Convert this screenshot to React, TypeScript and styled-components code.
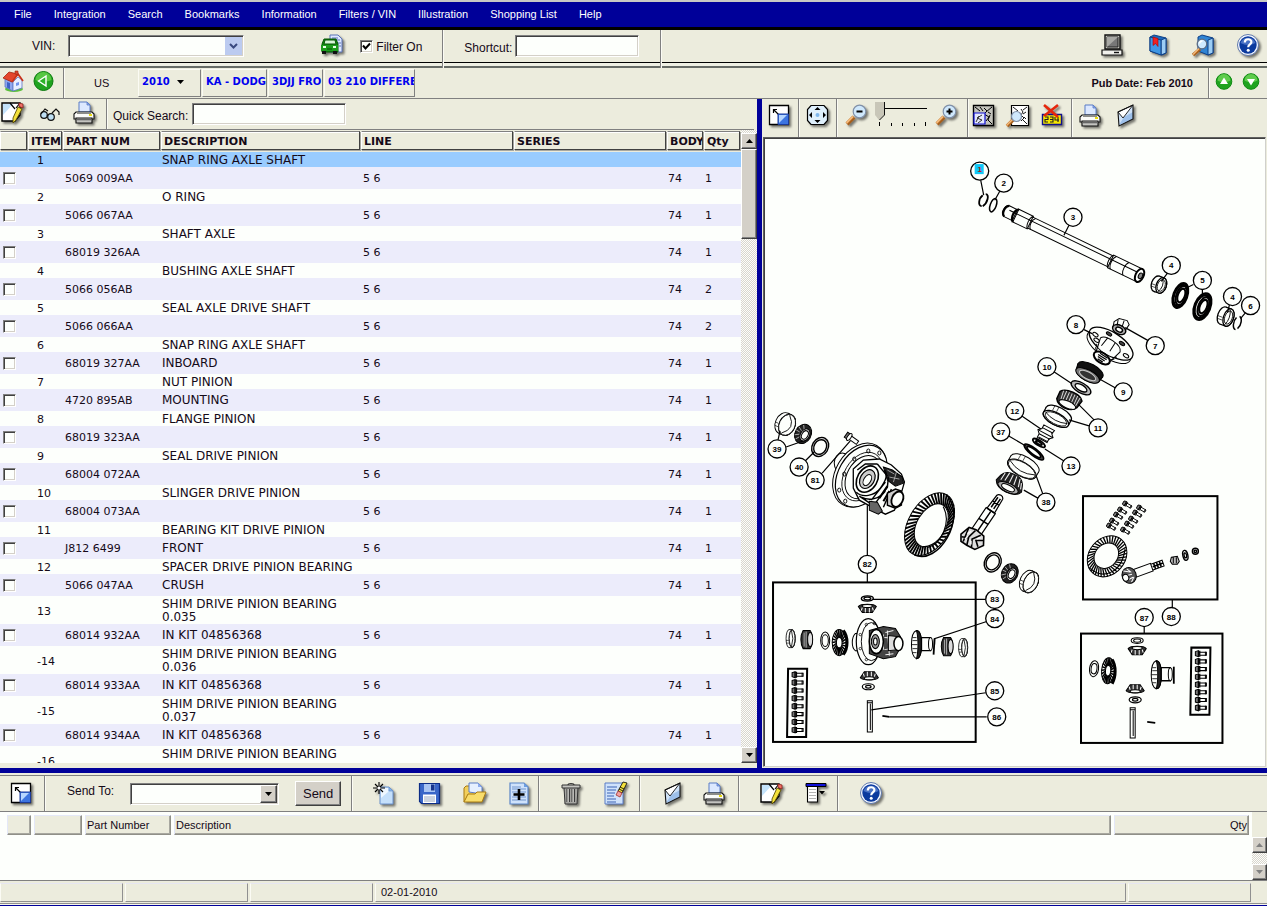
import React from 'react';
import styled, { createGlobalStyle, css } from 'styled-components';

const beige = '#ececdd';
const paper = '#fdfffc';
const navy = '#000099';
const sans = '"Liberation Sans", Arial, sans-serif';
const wide = '"DejaVu Sans", Verdana, sans-serif';

const GlobalStyle = createGlobalStyle`
  *, *::before, *::after { box-sizing: border-box; }
  html, body { margin: 0; height: 100%; background: ${beige}; }
  body { font-family: ${sans}; font-size: 12px; color: #150a18; }
  #root { height: 100%; }
  button, input, select { font-family: inherit; font-size: 12px; color: inherit; margin: 0; }
`;

const Page = styled.div`
  display: flex;
  flex-direction: column;
  height: 100vh;
  min-height: 600px;
  overflow: hidden;
  background: ${beige};
`;

const MenuBar = styled.nav`
  display: flex;
  flex: none;
  align-items: center;
  gap: 22px;
  height: 30px;
  padding: 0 0 2px 14px;
  background: ${navy};
  border-top: 2px solid #c8c8c4;
  border-bottom: 3px solid #000;
`;

const MenuLink = styled.a`
  color: #fff;
  font-size: 11px;
  line-height: 14px;
  text-decoration: none;
  white-space: nowrap;
`;

const Bar = styled.div<{ $h: number }>`
  display: flex;
  flex: none;
  align-items: stretch;
  height: ${(p) => p.$h}px;
`;

const VinBar = styled(Bar)`
  box-shadow: inset 0 -2px #666b66, inset 0 -5px #eff0e4, inset 0 -6px #000;
`;

const NavBar = styled(Bar)`
  border-bottom: 1px solid #808080;
`;

const Group = styled.div<{ $pl?: number; $pr?: number; $pb?: number; $gap?: number; $line?: boolean; $grow?: boolean }>`
  display: flex;
  align-items: center;
  gap: ${(p) => p.$gap ?? 0}px;
  padding: 0 ${(p) => p.$pr ?? 0}px ${(p) => p.$pb ?? 0}px ${(p) => p.$pl ?? 0}px;
  ${(p) => p.$grow && 'flex: 1; justify-content: flex-end;'}
  ${(p) => p.$line && `border-right: 1px solid #808080; box-shadow: 1px 0 #fbfbf4;`}
`;

const IconButton = styled.button`
  display: block;
  flex: none;
  width: 24px;
  height: 24px;
  padding: 0;
  border: 0;
  background: none;
  line-height: 0;
`;

const IconSvg = styled.svg<{ $flat?: boolean }>`
  display: block;
  overflow: visible;
  ${(p) => !p.$flat && 'filter: drop-shadow(2px 2px 1px rgba(0, 0, 0, 0.5));'}
`;

const Label = styled.label`
  line-height: 16px;
  white-space: nowrap;
`;

const LowLabel = styled(Label)`
  padding-top: 4px;
`;

const HighLabel = styled(Label)`
  padding-bottom: 6px;
`;

const sunken = css`
  border: 1px solid;
  border-color: #808080 #fff #fff #808080;
  box-shadow: inset 1px 1px #404040, inset -1px -1px #d4d0c8;
  background: ${paper};
  border-radius: 0;
  outline: 0;
`;

const TextBox = styled.input<{ $w: number }>`
  ${sunken}
  width: ${(p) => p.$w}px;
  height: 22px;
  padding: 0 3px;
`;

const SelectWrap = styled.div<{ $w: number }>`
  position: relative;
  width: ${(p) => p.$w}px;
  height: 22px;
`;

const SelectBox = styled.select`
  ${sunken}
  appearance: none;
  width: 100%;
  height: 22px;
  padding: 0 20px 0 4px;
`;

const SelectArrow = styled.span<{ $blue?: boolean }>`
  position: absolute;
  top: 2px;
  right: 2px;
  display: grid;
  place-items: center;
  width: 17px;
  height: 18px;
  pointer-events: none;
  background: ${(p) => (p.$blue ? '#bccbf0' : '#d4d0c8')};
  ${(p) => !p.$blue && 'border: 1px solid; border-color: #fff #404040 #404040 #fff; box-shadow: inset -1px -1px #808080;'}
`;

const Tick = styled.input`
  appearance: none;
  display: block;
  flex: none;
  width: 13px;
  height: 13px;
  background: ${paper};
  border: 1px solid;
  border-color: #808080 #fff #fff #808080;
  box-shadow: inset 1px 1px #404040, inset -1px -1px #d4d0c8;
`;

const TickBox = styled.span`
  position: relative;
  display: block;
  width: 13px;
  height: 13px;
  svg { position: absolute; left: 2px; top: 2px; pointer-events: none; }
`;

const Crumb = styled.button<{ $w: number }>`
  flex: none;
  width: ${(p) => p.$w}px;
  margin: 1px 1px 1px 0;
  padding: 0 0 4px 3px;
  overflow: hidden;
  text-align: left;
  white-space: nowrap;
  font-family: ${wide};
  font-size: 10px;
  font-weight: bold;
  color: #0000ee;
  background: ${beige};
  border: 1px solid;
  border-color: #fbfbf4 #808080 #808080 #fbfbf4;
  svg { margin-left: 7px; vertical-align: 1px; }
`;

const PubDate = styled.span`
  font-size: 11px;
  font-weight: bold;
  line-height: 14px;
  white-space: nowrap;
`;

const Country = styled.span`
  font-size: 11px;
  width: 44px;
`;

const Main = styled.main`
  display: grid;
  flex: 1;
  min-height: 0;
  grid-template-columns: minmax(0, 757fr) 5px minmax(0, 505fr);
  border-bottom: 5px solid ${navy};
`;

const Splitter = styled.div`
  background: ${navy};
`;

const Pane = styled.section`
  display: flex;
  flex-direction: column;
  min-height: 0;
  min-width: 0;
`;

const SearchBar = styled(Bar)`
  margin-right: 3px;
  border-bottom: 1px solid #808080;
`;

const PartsArea = styled.div`
  display: flex;
  flex: 1;
  min-height: 0;
  padding-bottom: 5px;
`;

const PartsScroll = styled.div`
  flex: 1;
  min-width: 0;
  overflow: hidden;
  background: ${paper};
`;

const PartsTable = styled.table`
  width: 100%;
  table-layout: fixed;
  border-collapse: collapse;
  font-family: ${wide};
  font-size: 11px;
  line-height: 13px;
`;

const HeadCell = styled.th`
  height: 22px;
  padding: 1px 1px 2px 0;
  text-align: left;
  background: ${beige};
`;

const HeadFace = styled.div`
  height: 19px;
  padding: 3px 0 0 2px;
  overflow: hidden;
  white-space: nowrap;
  border: 1px solid;
  border-color: #808080 #404040 #404040 #fff;
  box-shadow: inset 0 1px #fff, 1px 1px #a8a8a0;
  line-height: 14px;
`;

const Row = styled.tr<{ $tone: string }>`
  background: ${(p) => p.$tone};
`;

const Cell = styled.td<{ $pl?: number; $part?: boolean }>`
  height: ${(p) => (p.$part ? 22 : 15)}px;
  padding: ${(p) => (p.$part ? 0 : 2)}px 0 0 ${(p) => p.$pl ?? 2}px;
  vertical-align: middle;
`;

const NameCell = styled(Cell)`
  font-size: 12px;
`;

const Scrollbar = styled.div<{ $w: number; $pt?: number }>`
  display: flex;
  flex: none;
  flex-direction: column;
  width: ${(p) => p.$w}px;
  padding-top: ${(p) => p.$pt ?? 0}px;
  background: repeating-conic-gradient(#fdfdfa 0 25%, #d8d6ce 0 50%) 0 0 / 2px 2px;
`;

const ScrollButton = styled.button`
  display: grid;
  flex: none;
  place-items: center;
  width: 100%;
  height: 16px;
  padding: 0;
  background: #d4d0c8;
  border: 1px solid;
  border-color: #fff #404040 #404040 #fff;
  box-shadow: inset -1px -1px #808080;
`;

const Thumb = styled.div`
  height: 90px;
  background: #d4d0c8;
  border: 1px solid;
  border-color: #fff #404040 #404040 #fff;
  box-shadow: inset -1px -1px #808080;
`;

const Spacer = styled.div`
  flex: 1;
`;

const Viewer = styled.div`
  flex: 1;
  min-height: 0;
  margin: 0 1px 1px 1px;
  overflow: hidden;
  background: ${paper};
  border: 1px solid;
  border-color: #606060 #d0d0cc #d0d0cc #606060;
  box-shadow: inset 1px 1px #404040;
  svg { display: block; width: 100%; height: 100%; }
`;

const Slider = styled.div`
  position: relative;
  width: 56px;
  height: 28px;
  input { position: absolute; inset: 0; width: 56px; height: 28px; margin: 0; opacity: 0; }
`;

const SendBar = styled(Bar)`
  margin-top: 2px;
  border-top: 1px solid #808080;
  border-bottom: 1px solid #808080;
`;

const SendButton = styled.button`
  width: 46px;
  height: 25px;
  padding: 0;
  font-size: 13px;
  background: #d4d0c8;
  border: 1px solid;
  border-color: #fff #404040 #404040 #fff;
  box-shadow: inset -1px -1px #808080;
`;

const ListArea = styled.section`
  display: flex;
  flex: none;
  height: 69px;
  border-bottom: 1px solid #808080;
`;

const ListBody = styled.div`
  flex: 1;
  padding-left: 4px;
  background: ${paper};
`;

const ListTable = styled.table`
  width: 100%;
  table-layout: fixed;
  border-collapse: separate;
  border-spacing: 3px;
  font-size: 11px;
`;

const ListHead = styled.th<{ $right?: boolean }>`
  height: 20px;
  padding: 0 1px;
  text-align: ${(p) => (p.$right ? 'right' : 'left')};
  font-weight: normal;
  background: ${beige};
  border: 1px solid;
  border-color: #e4e8f8 #909088 #909088 #e4e8f8;
  box-shadow: inset -1px -1px #a8a8a0;
`;

const ListScroll = styled.div`
  display: flex;
  padding-top: 25px;
`;

const StatusBar = styled.footer`
  display: flex;
  flex: none;
  gap: 2px;
  height: 25px;
  padding: 2px 16px 2px 0;
  border-bottom: 1px solid ${navy};
  box-shadow: inset 0 -1px #f6f6ee, inset 0 -2px #909090;
`;

const StatusCell = styled.div<{ $grow?: boolean }>`
  flex: ${(p) => (p.$grow ? '1' : '0 0 123px')};
  height: 19px;
  padding-left: 5px;
  font-size: 11px;
  line-height: 17px;
  border: 1px solid;
  border-color: #e6e6f2 #909090 #909090 #fbfbf4;
`;

/* ---------- toolbar icons ---------- */

const art: Record<string, React.ReactNode> = {
  car: (
    <>
      <path d="M10 1h8l4 4v13H10z" fill="#dfe8ff" stroke="#5a74b8" />
      <path d="M12 4h6M12 6h8M18 9h3M19 12h2" stroke="#5a74b8" />
      <path d="M4 5h12l2 5v8H2v-8z" fill="#128a12" stroke="#055505" />
      <path d="M5 6h10l1 4H4z" fill="#d8f4d8" stroke="#055505" />
      <path d="M1 11h17v6H1z" fill="#1d9c1d" />
      <path d="M3 13h3M13 13h3" stroke="#e8ffe8" strokeWidth="2" />
      <path d="M7 15h5" stroke="#055505" />
      <path d="M2 17h4v3H2zM13 17h4v3h-4z" fill="#111" />
    </>
  ),
  monitor: (
    <>
      <path d="M4 1h15v14H4z" fill="#c4c4bc" stroke="#111" strokeWidth="1.4" />
      <path d="M6 3h11v10H6z" fill="#777" stroke="#222" />
      <path d="M6 13V3h11z" fill="#a8a8a4" />
      <path d="M1 16h20v5H1z" fill="#f0f0ec" stroke="#111" strokeWidth="1.2" />
      <path d="M13 18.500h5" stroke="#111" strokeWidth="1.4" />
    </>
  ),
  book: (
    <>
      <path d="M4 3l4-2 12 3v15l-4 2L4 17z" fill="#1d6cc0" stroke="#0d3f86" />
      <path d="M15 6l5-2v15l-5 2z" fill="#9ccdf4" stroke="#0d3f86" />
      <path d="M4 3l11 3v15L4 17z" fill="#3f97e4" stroke="#0d3f86" />
      <path d="M7 3l5 1.500v8L9.500 9.500 7 11.500z" fill="#e22" stroke="#a00" strokeWidth=".6" />
    </>
  ),
  bookSearch: (
    <>
      <path d="M7 3l4-2 11 3v15l-5 2-10-4z" fill="#2f84d4" stroke="#0d3f86" />
      <path d="M17 6l5-2v15l-5 2z" fill="#9ccdf4" stroke="#0d3f86" />
      <path d="M2 21l7-6" stroke="#a8601c" strokeWidth="3.500" />
      <path d="M2 20.500l6-6" stroke="#f5b878" strokeWidth="1.600" />
      <circle cx="11" cy="10" r="4.800" fill="#cfeaff" stroke="#5c6c84" strokeWidth="1.300" />
      <path d="M8.500 9.500a3 3 0 0 1 3-2.500" stroke="#fff" strokeWidth="1.500" fill="none" />
    </>
  ),
  help: (
    <>
      <circle cx="12" cy="11" r="10.500" fill="#f6f9ff" stroke="#6079ac" />
      <circle cx="12" cy="11" r="8.700" fill="#0b3a9e" />
      <path d="M4.500 9a8 8 0 0 1 15 0c-5 2.500-10 2.500-15 0z" fill="#6a8fd8" opacity=".65" />
      <path d="M8.800 8.600c0-4.600 6.800-4.200 6.600-.4-.2 2.200-3.200 2.200-3.200 5" fill="none" stroke="#fff" strokeWidth="2.200" />
      <circle cx="12.200" cy="16.200" r="1.500" fill="#fff" />
    </>
  ),
  home: (
    <>
      <ellipse cx="12" cy="19" rx="9" ry="3" fill="#5cbf3c" />
      <path d="M3 8l8 4v9l-8-4z" fill="#8fa6ee" stroke="#5d76c4" strokeWidth=".8" />
      <path d="M11 12l5-5 4 3v8l-9 3z" fill="#e8efff" stroke="#5d76c4" strokeWidth=".8" />
      <path d="M5 12l3 1v6l-3-1.500z" fill="#3f62c8" />
      <path d="M14 13l3-1v3l-3 1z" fill="#6f93ec" />
      <path d="M1 8l6-6 9 2-6 8z" fill="#e4452c" stroke="#a3240f" strokeWidth=".8" />
      <path d="M10 12l6-8 5 7" fill="none" stroke="#c8321a" strokeWidth="1.800" />
      <path d="M13 1h3v4l-3-1z" fill="#d8432c" stroke="#a3240f" strokeWidth=".6" />
    </>
  ),
  back: (
    <>
      <circle cx="10.500" cy="11" r="9.500" fill="#1fa31f" stroke="#0d7a10" />
      <path d="M2.500 10a8 8 0 0 1 16 0c-5 2-11 2-16 0z" fill="#7be05a" opacity=".6" />
      <path d="M5.500 11l7.500-5v10z" fill="#2bb428" stroke="#fff" strokeWidth="1.400" />
    </>
  ),
  up: (
    <>
      <circle cx="12" cy="10.500" r="7.800" fill="#1fa31f" stroke="#0d8a10" />
      <path d="M5.500 9.500a6.500 6.500 0 0 1 13 0c-4 2-9 2-13 0z" fill="#8be86a" opacity=".6" />
      <path d="M12 6.500l4 6.500H8z" fill="#fff" />
    </>
  ),
  down: (
    <>
      <circle cx="12" cy="10.500" r="7.800" fill="#1fa31f" stroke="#0d8a10" />
      <path d="M5.500 9.500a6.500 6.500 0 0 1 13 0c-4 2-9 2-13 0z" fill="#8be86a" opacity=".6" />
      <path d="M12 14.500L16 8H8z" fill="#fff" />
    </>
  ),
  edit: (
    <>
      <path d="M1 2h18v12l-5 6H1z" fill="#fff" stroke="#000" strokeWidth="1.400" />
      <path d="M2 3h10L2 14z" fill="#c3e2fa" />
      <path d="M9 2l5 6M15 7l4-5" stroke="#000" strokeWidth="1.200" />
      <path d="M17 6l4 2-6 11-3 3v-5z" fill="#f4e13c" stroke="#5b4e00" strokeWidth=".9" />
      <path d="M18 2l4 1v4l-4-1.500z" fill="#f07068" stroke="#8c2018" strokeWidth=".8" />
    </>
  ),
  glasses: (
    <>
      <circle cx="7" cy="14" r="3.300" fill="#bfe0f4" stroke="#111" strokeWidth="1.200" />
      <circle cx="14" cy="16" r="3.300" fill="#bfe0f4" stroke="#111" strokeWidth="1.200" />
      <path d="M4 13l4-5 3 2M15 12l4-4 3 3v3M10 14l1 1" fill="none" stroke="#111" strokeWidth="1.200" />
    </>
  ),
  printer: (
    <>
      <path d="M6 11V1h8l3 3v7z" fill="#dce8ff" stroke="#5b7cc6" />
      <path d="M14 1v3h3z" fill="#8eacee" stroke="#5b7cc6" strokeWidth=".8" />
      <path d="M3 11h16l2 2v5H1v-5z" fill="#fbfbf8" stroke="#111" strokeWidth="1.100" />
      <path d="M4 11h14v2H4z" fill="#8c8c88" />
      <path d="M16 13h3v2h-3z" fill="#e8dc10" />
      <path d="M3 17h16v5H3z" fill="#c4c4c0" stroke="#111" strokeWidth="1.100" />
      <path d="M4 18.500h14" stroke="#666" strokeWidth="1.600" />
    </>
  ),
  resize: (
    <>
      <path d="M1.500 1.500h19v19h-19z" fill="#fff" stroke="#000" strokeWidth="1.300" />
      <path d="M5.500 9V5.500H9M6 6l5 5" fill="none" stroke="#000" strokeWidth="1.200" />
      <path d="M10 10h10.500v10.500H10z" fill="#3c74e0" stroke="#1b3a9a" />
      <path d="M11 19v-8h8z" fill="#b6d6ff" />
    </>
  ),
  pan: (
    <>
      <path d="M5 1.500h13l3.500 4v11l-3.500 4H5l-3.500-4v-11z" fill="#dff0fc" stroke="#000" strokeWidth="1.200" />
      <path d="M11.500 3l3 3h-6zM11.500 19l3-3h-6zM3 11l3-3v6zM20 11l-3-3v6z" fill="#000" />
      <circle cx="11.500" cy="11" r="2" fill="#7fb7ec" />
    </>
  ),
  zoomOut: (
    <>
      <path d="M2 20l7-7" stroke="#a8601c" strokeWidth="4" />
      <path d="M1.500 19l6.500-6.500" stroke="#f5b878" strokeWidth="1.800" />
      <circle cx="14.500" cy="7.500" r="6.300" fill="#cfe8fc" stroke="#8090a8" strokeWidth="1.200" />
      <path d="M11.500 7.500h6" stroke="#000" strokeWidth="2" />
    </>
  ),
  zoomIn: (
    <>
      <path d="M2 20l7-7" stroke="#a8601c" strokeWidth="4" />
      <path d="M1.500 19l6.500-6.500" stroke="#f5b878" strokeWidth="1.800" />
      <circle cx="14.500" cy="7.500" r="6.300" fill="#cfe8fc" stroke="#8090a8" strokeWidth="1.200" />
      <path d="M11.500 7.500h6M14.500 4.500v6" stroke="#000" strokeWidth="2" />
    </>
  ),
  zone: (
    <>
      <path d="M1.500 1.500h20v20h-20z" fill="#c4c4bc" stroke="#000" strokeWidth="1.400" />
      <path d="M3 3l5 4M20 3l-6 5M20 20l-4-4M12 4l3 3-3 3 5 3-3 4M16 8l3 2M8 3l3 4M18 11l-2 5" fill="none" stroke="#000" />
      <path d="M2 9h11v11H2z" fill="#e4e8fc" stroke="#1010d0" strokeWidth="1.200" />
      <path d="M10 11l-5 3 5 2-4 3M4 18l3-6" fill="none" stroke="#333" />
    </>
  ),
  zoneSearch: (
    <>
      <path d="M5.500 1.500h17v20h-17z" fill="#fff" stroke="#000" strokeWidth="1.200" />
      <path d="M7 3l5 4M21 3l-4 3M21 20l-4-4M15 5l2 3-2 3 3 3-3 3M20 8l-3 2M18 13l2 2" fill="none" stroke="#000" strokeWidth=".9" />
      <path d="M1 22l7-7" stroke="#a8601c" strokeWidth="3.500" />
      <path d="M.5 21.500l6-6" stroke="#f5b878" strokeWidth="1.600" />
      <circle cx="10.500" cy="12.500" r="5" fill="#cfe8fc" stroke="#8090a8" strokeWidth="1.200" />
    </>
  ),
  clear: (
    <>
      <path d="M2.500 10.500h19v10h-19z" fill="#f6e800" stroke="#10108c" strokeWidth="1.400" />
      <path d="M5 13h3v2.500H5V18h3M10 13h3v5h-3M10 15.500h3M15 13v3h4M18 13v5" fill="none" stroke="#222" strokeWidth="1.100" />
      <path d="M4 1l14 12M18 1L4 12" stroke="#e6260c" strokeWidth="2.600" />
    </>
  ),
  envelope: (
    <>
      <path d="M3 8L18 1v14L4 22z" fill="#cfe2f8" />
      <path d="M4 21l5-8 9-5v7z" fill="#9dc0ea" />
      <path d="M3 8l5 6L18 1z" fill="#fff" stroke="#111" strokeWidth=".9" />
      <path d="M3 8L18 1v14L4 22z" stroke="#111" strokeWidth="1.100" />
    </>
  ),
  fresh: (
    <>
      <path d="M7 22V5h9l4 4v13z" fill="#c5e0fb" stroke="#6a92cc" />
      <path d="M8 6h7v4L8 16z" fill="#eef7ff" />
      <path d="M16 5v4h4z" fill="#84b4ea" stroke="#6a92cc" strokeWidth=".7" />
      <path d="M6 0v12M0 6h12M2 2l8 8M10 2l-8 8" stroke="#000" strokeWidth="1.100" />
      <circle cx="6" cy="6" r="1.600" fill="#fff" />
    </>
  ),
  save: (
    <>
      <path d="M1.500 1.500h20v20h-18l-2-2z" fill="#3a66c8" stroke="#0c2c86" strokeWidth="1.200" />
      <path d="M6 2h11v8H6z" fill="#a9c4f2" />
      <path d="M13 2.500h3.500v6H13z" fill="#16348c" />
      <path d="M5 12.500h13V21H5z" fill="#fff" />
      <path d="M6 15h11M6 17h11M6 19h11" stroke="#9aa8c0" />
    </>
  ),
  folder: (
    <>
      <path d="M1 20V6l2-2h5l2 2h8v3" fill="#f2cf5c" stroke="#a87a10" />
      <path d="M6 10V1h9l4 4v7z" fill="#e6f0ff" stroke="#5b7cc6" />
      <path d="M15 1v4h4z" fill="#8eacee" />
      <path d="M1 20l4-8h7l2-2h9l-4 10z" fill="#f8dd6c" stroke="#a87a10" />
    </>
  ),
  add: (
    <>
      <path d="M2 1h14l4 4v17H2z" fill="#cfe2fb" stroke="#5b86c8" strokeWidth="1.200" />
      <path d="M16 1v4h4z" fill="#6d9ee0" />
      <path d="M4 5h9M4 7h14M4 10h14M4 15h14M4 18h14" stroke="#7295cc" />
      <path d="M11 7v11M5.500 12.500h11" stroke="#000" strokeWidth="2.600" />
    </>
  ),
  trash: (
    <>
      <path d="M4 5h14l-1 17H5z" fill="#a6a6a2" stroke="#333" />
      <path d="M7 7v13M9.500 7v13M12 7v13M14.500 7v13" stroke="#3c3c3c" strokeWidth="1.100" />
      <path d="M8 7v13M13 7v13" stroke="#e8e8e4" strokeWidth=".7" />
      <path d="M2 3h18v3H2z" fill="#c6c6c2" stroke="#333" />
      <path d="M8 3c0-2 6-2 6 0" fill="none" stroke="#333" strokeWidth="1.200" />
    </>
  ),
  listEdit: (
    <>
      <path d="M1 1h18v21H1z" fill="#cfe2fb" stroke="#5b7cc6" />
      <path d="M3 5h10M3 8h9M3 11h8M3 14h7M3 17h9M3 20h9" stroke="#3c62b4" strokeWidth="1.100" />
      <path d="M19 0l4 1-5 10-4-2z" fill="#f4e13c" stroke="#000" strokeWidth=".8" />
      <path d="M16 5l4 2M15 7l4 2" stroke="#000" strokeWidth=".8" />
      <path d="M14 9l4 2-2 4-4-2z" fill="#f0a0a0" stroke="#a03028" strokeWidth=".8" />
    </>
  ),
  columns: (
    <>
      <path d="M2.500 4h10v16h-10z" fill="#fff" stroke="#000" strokeWidth="1.100" />
      <path d="M4 7.500h7M4 10.500h7M4 13.500h7M4 16.500h7" stroke="#aaa" strokeWidth=".9" />
      <path d="M1 1.500h20v3H1z" fill="#1010d8" stroke="#000" />
      <path d="M14 9h6l-3 3.500z" fill="#000" />
    </>
  ),
};

const flatIcons = ['up', 'down', 'back', 'glasses', 'home'];

const Icon = ({ name, title }: { name: string; title: string }) => (
  <IconButton type="button" aria-label={title} title={title}>
    <IconSvg $flat={flatIcons.includes(name)} width="24" height="24" viewBox="0 0 24 24" fill="none">
      {art[name]}
    </IconSvg>
  </IconButton>
);

const Triangle = ({ up, dim }: { up?: boolean; dim?: boolean }) => (
  <svg width="7" height="4" viewBox="0 0 7 4">
    <path d={up ? 'M0 4h7L3.500 0z' : 'M0 0h7L3.500 4z'} fill={dim ? '#808080' : '#000'} />
  </svg>
);

/* ---------- parts illustration ---------- */

type Oval = { x: number; y: number; a: number; b: number; r?: number };

const Ring = ({ x, y, a, b, r = 0, k = 0.75, w = 1, fill = paper }: Oval & { k?: number; w?: number; fill?: string }) => (
  <g transform={`translate(${x} ${y}) rotate(${r})`} strokeWidth={w}>
    <ellipse rx={a} ry={b} fill={fill} />
    <ellipse rx={a * k} ry={b * k} fill={paper} />
  </g>
);

/* open band seen from one side: two ovals joined by straight edges, far rim showing inside */
const Sleeve = ({ x, y, a, b, r = 0, d, w = 1, k = 0.94 }: Oval & { d: number; w?: number; k?: number }) => (
  <g transform={`translate(${x} ${y}) rotate(${r})`} strokeWidth={w}>
    <ellipse rx={a} ry={b} cy={-d} fill={paper} />
    <path d={`M${-a} ${-d}V0A${a} ${b} 0 0 0 ${a} 0V${-d}`} fill={paper} />
    <ellipse rx={a} ry={b} fill={paper} />
    <ellipse rx={a * k} ry={b * k} fill={paper} strokeWidth=".8" />
    <path d={`M${-a * 0.88} ${-b * 0.2}Q0 ${b * 1.7 - d} ${a * 0.88} ${-b * 0.2}`} strokeWidth=".8" />
    <path d={`M${-a * 0.5} ${-d - b * 0.86}v${d * 0.9}M${-a * 0.2} ${-d - b}v${d * 0.9}`} strokeWidth=".6" />
  </g>
);

const Teeth = ({ x, y, a, b, r = 0, k = 0.6, n = 24, w = 1.4, off = 0 }: Oval & { k?: number; n?: number; w?: number; off?: number }) => (
  <g transform={`translate(${x} ${y}) rotate(${r})`}>
    <ellipse rx={a} ry={b} fill={paper} />
    {Array.from({ length: n }, (_, i) => {
      const t = (i / n) * Math.PI * 2;
      const u = t + 0.16;
      return (
        <line
          key={i}
          x1={a * Math.cos(t)}
          y1={b * Math.sin(t)}
          x2={a * k * Math.cos(u)}
          y2={off + b * k * Math.sin(u)}
          strokeWidth={w}
        />
      );
    })}
    <ellipse rx={a * k} ry={b * k} cy={off} fill={paper} />
  </g>
);

const Bolt = ({ x, y, r = 0, s = 1 }: { x: number; y: number; r?: number; s?: number }) => (
  <g transform={`translate(${x} ${y}) rotate(${r}) scale(${s})`}>
    <path d="M0-1.500h7v3H0z" fill={paper} />
    <path d="M-4-2l3-1v6l-3-1z" fill="#777" />
    <path d="M-1-2.500h1.500v5H-1zM6-2v4" />
  </g>
);

const BoltBox = ({ x, y, w, h, n }: { x: number; y: number; w: number; h: number; n: number }) => (
  <g>
    <path d={`M${x + 1} ${y}h${w - 1}l-1 ${h}h-${w - 1}z`} strokeWidth="2" fill={paper} />
    {Array.from({ length: n }, (_, i) => (
      <Bolt key={i} x={x + 9} y={y + 6 + (i * (h - 13)) / (n - 1)} />
    ))}
  </g>
);

const Callout = ({ x, y, n, lit }: { x: number; y: number; n: number; lit?: boolean }) => (
  <g>
    <circle cx={x} cy={y} r="9" fill={paper} strokeWidth="1.300" />
    {lit && <rect x={x - 5} y={y - 7} width="9" height="10" fill="#10c8f8" stroke="none" />}
    <text x={x} y={lit ? y + 1 : y + 3} textAnchor="middle" fontFamily={sans} fontSize="8" fontWeight="bold" fill={lit ? '#b02020' : '#000'} stroke="none">
      {n}
    </text>
  </g>
);

/* mating bevel gear, drawn end up */
const SpiderGear = ({ x, y, flip }: { x: number; y: number; flip?: boolean }) => (
  <g transform={`translate(${x} ${y}) scale(1 ${flip ? -1 : 1})`}>
    <path d="M-9-2c2-3 16-3 18 0l-4 6h-10z" fill="#333" />
    <path d="M-6 2l1-3M-2 4v-5M2 4v-5M6 2L5-1" stroke="#fff" />
    <ellipse cy="-2.500" rx="5" ry="1.500" fill={paper} />
  </g>
);

const SideGear = ({ x, y }: { x: number; y: number }) => (
  <g transform={`translate(${x} ${y})`}>
    <path d="M0-14c4 0 5 6 5 14s-1 14-5 14c-3-1-5-6-5-14s2-13 5-14z" fill={paper} />
    <path d="M0-14c4 0 5 6 5 14s-1 14-5 14c2-7 2-21 0-28z" fill="#222" />
    <path d="M-4-7h4M-4-4h5M-5 0h6M-4 4h5M-4 8h4" strokeWidth=".8" />
    <path d="M5-7h9v13H5z" fill={paper} strokeWidth="1.300" />
    <ellipse cx="14" cy="-.5" rx="2" ry="6.500" fill={paper} />
  </g>
);

const BearingCone = ({ x, y, r }: { x: number; y: number; r: number }) => (
  <g transform={`translate(${x} ${y}) rotate(${r})`}>
    <ellipse rx="10" ry="8" fill="#222" />
    <path d="M-8-4l5 3M-5-7l3 4M0-8v4M4-7L2-3M8-4L4-1" stroke="#ccc" strokeWidth=".7" />
    <ellipse cy="2" rx="6.500" ry="4.500" fill="#ddd" />
    <ellipse cy="2" rx="4.500" ry="3" fill={paper} />
  </g>
);

const SideBearing = ({ x, y }: { x: number; y: number }) => (
  <g transform={`translate(${x} ${y})`}>
    <path d="M-4-9h7c3 4 3 14 0 18h-7c-3-5-3-13 0-18z" fill="#333" />
    <path d="M-3-7v14M-1-8v16" stroke="#ccc" strokeWidth=".8" />
    <ellipse cx="3" rx="2.500" ry="7" fill="#ddd" />
  </g>
);

const callouts: [number, number, number][] = [
  [1004, 184, 2], [1073, 218, 3], [1171, 266, 4], [1202, 281, 5], [1232, 297, 4], [1250, 306, 6],
  [1155, 346, 7], [1076, 325, 8], [1123, 392, 9], [1047, 367, 10], [1098, 428, 11], [1015, 411, 12],
  [1001, 432, 37], [1071, 466, 13], [1046, 502, 38], [778, 449, 39], [800, 467, 40], [816, 480, 81],
  [868, 564, 82], [995, 599, 83], [995, 618, 84], [995, 690, 85], [997, 716, 86], [1144, 617, 87], [1171, 616, 88],
];

const leaders =
  'M981 181l3 15M1000 192l-5 9M1069 226l-5 10M1167 274l-6 8M1193 285l-10 5M1202 290v8M1229 305l-2 8M1245 313l-5 6' +
  'M1084 330l8 4M1148 341l-23-13M1115 388l-16-9M1054 372l18 12M1094 420l-16-16M1089 426l-20-6M1022 416l19 13' +
  'M1009 436l17 10M1064 461l-19-12M1038 498l-14-8M1043 494l-7-19M779 440l2-9M787 447l17-6M806 461l9-9M823 473l28-32' +
  'M868 555v-50M868 573v9M873 599h113M987 621l-52 17v6M986 692l-114 17M987 716h-97M1144 626v7M1172 599v8';

const smallBolts: [number, number][] = [
  [1126, 504], [1121, 510], [1117, 515], [1113, 521], [1110, 526],
  [1140, 508], [1136, 513], [1132, 519], [1128, 524], [1124, 530],
];

const Illustration = () => (
  <svg viewBox="765 139 499 626" preserveAspectRatio="xMinYMin meet" fill="none" stroke="#000" strokeWidth="1" role="img" aria-label="Front differential, exploded view">
    {/* snap ring and o-ring */}
    <path d="M983 196c-4 3-5 11-1 11M986 195c4 0 2 9-3 12" strokeWidth="1.800" />
    <ellipse cx="993.500" cy="206" rx="3" ry="7" transform="rotate(20 993.500 206)" strokeWidth="1.500" />
    {/* axle shaft */}
    <g transform="translate(1007 212) rotate(25.800)">
      <path d="M0-6h9v12H0c-5-1-5-11 0-12z" fill={paper} />
      <path d="M10-7h16v14H10zM26-6h89v12H26z" fill={paper} />
      <path d="M115-7h33v14h-33z" fill={paper} />
      <path d="M0-6c-4 2-4 10 0 12M10-7c-4 3-4 11 0 14" strokeWidth="2.200" />
      <path d="M2-2h143M26-7c-3 3-3 11 0 14M29-6c-3 3-3 9 0 12M115-7c-3 3-3 11 0 14M118-7c-3 3-3 11 0 14M132-7c-3 3-3 11 0 14" />
      <ellipse cx="147" rx="4" ry="7" fill={paper} strokeWidth="2" />
      <ellipse cx="148" rx="2" ry="3" fill="#888" />
    </g>
    {/* bushings and seals */}
    <Sleeve x={1161} y={286} a={8} b={5} r={-70} d={5} k={0.75} w={1.3} />
    <g>
      <Ring x={1180} y={296} a={13} b={7} r={-70} k={0.85} w={2} fill="#222" />
      <Ring x={1181} y={296} a={10} b={5} r={-70} k={0.7} w={2} fill="#aaa" />
      <Ring x={1202} y={307} a={14} b={8} r={-68} k={0.85} w={2} fill="#222" />
      <Ring x={1203} y={307} a={10} b={5} r={-68} k={0.7} w={2} fill="#aaa" />
    </g>
    <Sleeve x={1228} y={318} a={9} b={5} r={-70} d={6} k={0.75} w={1.3} />
    <path d="M1236 318c-4 4-4 11-1 12M1239 317c3 1 2 9-2 12" strokeWidth="1.500" />
    {/* pinion nut */}
    <path d="M1114 322l5-3 8 2 2 4-4 6-12-4z" fill={paper} />
    <Ring x={1119} y={330} a={7} b={4.5} r={25} k={0.5} w={1.4} fill="#aaa" />
    <path d="M1118 320l-1 6M1124 321l-2 6" />
    {/* pinion flange */}
    <g transform="translate(1111 344) rotate(33)">
      <ellipse cy="4" rx="25" ry="11" fill={paper} />
      <ellipse rx="25" ry="11" fill={paper} strokeWidth="1.300" />
      <ellipse cx="-18" cy="1" rx="3" ry="1.700" />
      <ellipse cx="-14" cy="5" rx="3" ry="1.700" />
      <ellipse cx="19" cy="2" rx="3" ry="1.700" />
      <ellipse cx="-7" cy="-7" rx="3" ry="1.500" fill="#444" />
      <ellipse cx="9" cy="-6" rx="3" ry="1.500" fill="#444" />
      <path d="M-12 1c2-6 22-6 24 1l-3 13c-3 5-14 5-17 0z" fill={paper} />
      <path d="M-12 8c2 5 22 5 24 0M-11 11c2 6 19 6 22 0M-6-3l-1 10M3-3v10" />
      <ellipse cy="17" rx="9" ry="5" fill={paper} strokeWidth="2" />
      <path d="M-5 16h10M-4 14h9M-4 18h8M-3 20h6" strokeWidth="1.200" />
    </g>
    {/* seal, slinger, bearing cone and cup */}
    <g transform="translate(1089 373) rotate(28)">
      <ellipse cy="-3" rx="14" ry="6" fill="#111" />
      <path d="M-14-3l1 6c3 7 23 7 26 0l1-6" fill="#111" />
      <ellipse cy="3" rx="13" ry="5.500" fill="#777" />
      <ellipse cy="3" rx="9" ry="3.500" fill="#333" stroke="#ccc" />
    </g>
    <Ring x={1081} y={388} a={11} b={5} r={30} k={0.6} w={1.3} fill="#bbb" />
    <g transform="translate(1069 401) rotate(24)">
      <path d="M-12-5c4-6 20-6 24 0l-2 8c-4 7-18 7-22 0z" fill="#333" strokeWidth="1.400" />
      <path d="M-9-7l1 9M-6-8v10M-3-8v10M0-8v10M3-8v10M6-8v10M9-7l-1 9" stroke="#ddd" strokeWidth=".9" />
      <ellipse cy="4" rx="9" ry="3.500" fill={paper} />
    </g>
    <Sleeve x={1056} y={419} a={14} b={6} r={28} d={6} k={0.85} w={1.3} />
    {/* crush spacer and shims */}
    <g transform="translate(1046 434) rotate(28)">
      <path d="M-6-7h12l-1 4 3 3-3 3v4h-11v-4l-3-3 3-3z" fill={paper} />
      <path d="M-6-4h12M-8 0H8M-6 3H6M-5 6H5" />
    </g>
    <Ring x={1039} y={443} a={7} b={2.5} r={32} k={0.5} w={1.8} />
    <Ring x={1034} y={452} a={12} b={3.5} r={38} k={0.7} w={1.600} fill="#444" />
    <Sleeve x={1022} y={469} a={16} b={7} r={30} d={6} />
    {/* inner pinion bearing */}
    <g transform="translate(1010 484) rotate(26)">
      <path d="M-12-4c3-9 21-9 24 0l2 6c-4 9-24 9-28 0z" fill="#222" />
      <path d="M-9-8l-1 8M-5-10l-1 9M-1-10v9M3-10l1 9M7-9l2 8M10-6l2 6" stroke="#eee" strokeWidth="1.100" />
      <ellipse cy="4" rx="11" ry="4.500" fill="#aaa" />
      <ellipse cy="4" rx="7" ry="2.800" fill={paper} />
    </g>
    {/* drive pinion */}
    <g transform="translate(973 538) rotate(-56)">
      <path d="M5-6h28v11H5zM33-5l16 1c3 1 3 6 0 7l-16 1z" fill={paper} strokeWidth="1.200" />
      <path d="M20-6v11M33-5v9M36-2h12M36 1h12M8 0h24M42-4v7" strokeWidth="1.500" />
      <path d="M-9-8l6-4 10 3 2 7-1 10-8 5-8-5-1-9z" fill="#ddd" strokeWidth="1.600" />
      <path d="M-8-6l14-3M-9-1l8-3 9 2M-8 4l7-4 8 5M-4 9l4-5 4 6M-5-10l3 6" strokeWidth="1.600" />
      <path d="M-5-6l4 1M1-7l4 2M-6 2l3-2M2 4l3 2" stroke="#fff" strokeWidth="1.400" />
    </g>
    {/* ring gear */}
    <Teeth x={930} y={524} a={34} b={21} r={-60} k={0.68} n={46} w={1.800} off={2} />
    <g transform="translate(930 524) rotate(-60)">
      <path d="M-21 10c10 10 34 8 43-7" strokeWidth="1.100" />
      <path d="M-34 2c2 26 58 28 68-2" strokeWidth="1.500" />
    </g>
    {/* carrier bearings */}
    <Sleeve x={788} y={425} a={11} b={8} r={-65} d={4} k={0.98} w={0.9} />
    <BearingCone x={804} y={434} r={-60} />
    <Ring x={821} y={447} a={10} b={8} r={-60} k={0.76} w={1.4} fill="#ccc" />
    <Ring x={993} y={562} a={10} b={8} r={-60} k={0.78} w={1.4} />
    <BearingCone x={1010} y={573} r={-65} />
    <Sleeve x={1031} y={582} a={11} b={7} r={-65} d={4} k={0.98} w={0.9} />
    {/* flange bolt */}
    <g transform="translate(850 437) rotate(35)">
      <path d="M0-2h10v4H0z" fill={paper} />
      <path d="M-4-3h3v6h-3z" fill="#777" />
      <ellipse rx="1.800" ry="4" fill={paper} />
    </g>
    {/* differential case */}
    <g>
      <ellipse cx="843" cy="463" rx="8" ry="10" fill={paper} />
      <g transform="translate(862 476) rotate(-60)">
        <ellipse cx="0" cy="-2" rx="34" ry="24" fill={paper} />
        <ellipse rx="33" ry="23" fill={paper} strokeWidth="1.200" />
        <ellipse cy="1" rx="26" ry="18" strokeWidth=".8" />
        <ellipse cy="2" rx="23" ry="16" />
      </g>
      {[[869, 451], [880, 453], [855, 459], [845, 474], [840, 490], [846, 501]].map(([x, y]) => (
        <ellipse key={x} cx={x} cy={y} rx="1.600" ry="2" strokeWidth=".9" />
      ))}
      <path d="M854 469l10-9 16-1 12 6 10 9 3 8-4 14-6 14-9 4-8-4-18-10-6-12z" fill={paper} strokeWidth="1.300" />
      <path d="M884 467l9 3 10 7 1 6-8 3-8-6z" fill="#222" />
      <path d="M888 470l7 4M890 477l10 2M897 472l-3 10" stroke="#bbb" strokeWidth=".8" />
      <path d="M857 492c6 6 18 4 24-4s8-14 4-18M862 497c8 4 18 2 24-6M876 503l12-16 1-10M872 500l14-18M884 507l8-18M860 496l12 8M878 464l10 12M858 470l8-6 12 0" strokeWidth="1.400" />
      <path d="M880 498l8-12M884 501l6-10" strokeWidth="2" />
      <path d="M870 501l8 1 5 9-4 3-9-4z" fill="#666" />
      <ellipse cx="868" cy="479" rx="10" ry="14" transform="rotate(30 868 479)" fill={paper} strokeWidth="1.600" />
      <ellipse cx="868" cy="479" rx="7" ry="10" transform="rotate(30 868 479)" fill="#ccc" strokeWidth="1.200" />
      <ellipse cx="868" cy="480" rx="3.500" ry="6" transform="rotate(30 868 480)" fill={paper} />
      <path d="M888 493l8-4 6 2v14l-6 3-8-3z" fill="#ccc" strokeWidth="1.400" />
      <ellipse cx="898" cy="499" rx="5.500" ry="8" transform="rotate(25 898 499)" fill={paper} strokeWidth="1.800" />
    </g>
    {/* case kit */}
    <rect x="774" y="582" width="202" height="159" strokeWidth="2" />
    <Ring x={868} y={598} a={6} b={2.6} k={0.55} w={1.3} fill="#ccc" />
    <SpiderGear x={868} y={608} />
    <Sleeve x={793} y={638} a={9} b={3} r={-90} d={3} w={0.8} />
    <SideBearing x={808} y={639} />
    <Ring x={826} y={640} a={4.500} b={8.500} k={0.7} w={1} />
    <Teeth x={840} y={642} a={7} b={13} k={0.4} n={22} w={1.500} />
    <path d="M844 630c5 6 5 18 0 24" strokeWidth="3" />
    <g>
      <path d="M859 633h-3c-4 4-4 14 0 17h3" fill={paper} />
      <ellipse cx="869" cy="641" rx="12" ry="23" fill={paper} strokeWidth="1.200" />
      <ellipse cx="872" cy="641" rx="10" ry="19" strokeWidth=".9" />
      {[[867, 624], [875, 623], [861, 634], [861, 648], [867, 659]].map(([x, y]) => (
        <circle key={`${x}-${y}`} cx={x} cy={y} r="1.200" strokeWidth=".7" />
      ))}
      <path d="M870 630l14-4 12 2 5 8v11l-5 9-12 2-14-5z" fill="#444" />
      <path d="M886 632l8-2M885 637l14 1M885 649l12-2M886 654l8-1M888 630l2 25M884 634v15" stroke="#eee" />
      <ellipse cx="877" cy="641" rx="7" ry="12" fill={paper} strokeWidth="1.600" />
      <ellipse cx="876" cy="641" rx="4" ry="7" fill="#999" />
      <ellipse cx="876" cy="641" rx="1.800" ry="3.500" fill={paper} />
      <path d="M889 635l9 1v13l-9 1z" fill="#ddd" />
      <ellipse cx="899" cy="643" rx="4.500" ry="7" fill={paper} strokeWidth="1.500" />
    </g>
    <SideGear x={917} y={644} />
    <path d="M935 638l-1 16" strokeWidth="1.800" />
    <SideBearing x={948} y={646} />
    <Sleeve x={965} y={647} a={9} b={3} r={-90} d={3} w={0.8} />
    <SpiderGear x={870} y={675} flip />
    <Ring x={869} y={686} a={6} b={3} k={0.45} w={1.200} />
    <path d="M868 700h5v31h-5zM868 702h5M871 703v26" fill={paper} />
    <path d="M883 715l7 1" strokeWidth="1.800" />
    <BoltBox x={788} y={668} w={20} h={68} n={8} />
    {/* ring and pinion kit */}
    <rect x="1083" y="496" width="134" height="103" strokeWidth="2" />
    {smallBolts.map(([x, y]) => (
      <Bolt key={`${x}-${y}`} x={x} y={y} r={30} s={0.85} />
    ))}
    <Teeth x={1107} y={556} a={22} b={18} r={-50} k={0.62} n={38} w={1.300} off={-1} />
    <path d="M1090 568c14 12 32 4 35-20" strokeWidth="1.100" />
    <g transform="translate(1129 575) rotate(-20)">
      <path d="M6-4h18v8H6zM24-3h12v6H24z" fill={paper} />
      <path d="M25 0h11M27-3v6M30-3v6M33-3v6" strokeWidth="1.600" />
      <ellipse rx="7" ry="8" fill="#555" />
      <path d="M-4-6l6 3M-5-1l8 1M-4 4l7-1M0-7l3 5M0 7l4-4" stroke="#fff" />
      <ellipse cx="-4" cy="1" rx="3" ry="3.500" fill={paper} />
    </g>
    <path d="M1171 557l6-1 2 5-2 3h-5l-2-3zM1173 557v6M1176 557v6" fill="#bbb" />
    <Ring x={1185} y={555} a={2.5} b={5} r={-12} k={0.5} w={1.4} />
    <Ring x={1195} y={551} a={3} b={3} k={0.4} w={1.4} fill="#ccc" />
    {/* gear kit */}
    <rect x="1081" y="633" width="141" height="109" strokeWidth="2" />
    <Ring x={1137} y={640} a={6} b={2.8} k={0.6} w={1} />
    <SpiderGear x={1137} y={650} />
    <Ring x={1094} y={668} a={4.500} b={8} r={8} k={0.65} w={1} />
    <Teeth x={1108} y={670} a={6.500} b={13} r={4} k={0.4} n={22} w={1.500} />
    <path d="M1112 659c4 6 4 17 0 24" strokeWidth="3" />
    <SideGear x={1156} y={674} />
    <path d="M1173.500 666v17" strokeWidth="1.800" />
    <SpiderGear x={1135} y={688} flip />
    <Ring x={1135} y={699} a={6} b={3} k={0.45} w={1.200} />
    <path d="M1130 707h5v30h-5zM1130 709h5M1133 710v25" fill={paper} />
    <path d="M1147 721l8 1" strokeWidth="1.800" />
    <BoltBox x={1190} y={647} w={20} h={67} n={8} />
    {/* callouts */}
    <path d={leaders} strokeWidth="1.200" />
    <Callout x={980} y={172} n={1} lit />
    {callouts.map(([x, y, n]) => (
      <Callout key={`${x}-${n}`} x={x} y={y} n={n} />
    ))}
  </svg>
);

/* ---------- data ---------- */

const menus = ['File', 'Integration', 'Search', 'Bookmarks', 'Information', 'Filters / VIN', 'Illustration', 'Shopping List', 'Help'];

type Part = { item: string; name: string; num: string; note?: string; qty: string };

const parts: Part[] = [
  { item: '1', name: 'SNAP RING AXLE SHAFT', num: '5069 009AA', qty: '1' },
  { item: '2', name: 'O RING', num: '5066 067AA', qty: '1' },
  { item: '3', name: 'SHAFT AXLE', num: '68019 326AA', qty: '1' },
  { item: '4', name: 'BUSHING AXLE SHAFT', num: '5066 056AB', qty: '2' },
  { item: '5', name: 'SEAL AXLE DRIVE SHAFT', num: '5066 066AA', qty: '2' },
  { item: '6', name: 'SNAP RING AXLE SHAFT', num: '68019 327AA', note: 'INBOARD', qty: '1' },
  { item: '7', name: 'NUT PINION', num: '4720 895AB', note: 'MOUNTING', qty: '1' },
  { item: '8', name: 'FLANGE PINION', num: '68019 323AA', qty: '1' },
  { item: '9', name: 'SEAL DRIVE PINION', num: '68004 072AA', qty: '1' },
  { item: '10', name: 'SLINGER DRIVE PINION', num: '68004 073AA', qty: '1' },
  { item: '11', name: 'BEARING KIT DRIVE PINION', num: 'J812 6499', note: 'FRONT', qty: '1' },
  { item: '12', name: 'SPACER DRIVE PINION BEARING', num: '5066 047AA', note: 'CRUSH', qty: '1' },
  { item: '13', name: 'SHIM DRIVE PINION BEARING\n0.035', num: '68014 932AA', note: 'IN KIT 04856368', qty: '1' },
  { item: '-14', name: 'SHIM DRIVE PINION BEARING\n0.036', num: '68014 933AA', note: 'IN KIT 04856368', qty: '1' },
  { item: '-15', name: 'SHIM DRIVE PINION BEARING\n0.037', num: '68014 934AA', note: 'IN KIT 04856368', qty: '1' },
];

const heads = ['', 'ITEM', 'PART NUM', 'DESCRIPTION', 'LINE', 'SERIES', 'BODY', 'Qty'];
const widths = [28, 35, 98, 200, 153, 0, 37, 37];

const ItemRow = ({ item, name, selected }: { item: string; name: string; selected?: boolean }) => (
  <Row $tone={selected ? '#99ccff' : paper}>
    <Cell />
    <Cell $pl={9}>{item}</Cell>
    <Cell />
    <NameCell $pl={1}>
      {name.split('\n').map((line) => (
        <div key={line}>{line}</div>
      ))}
    </NameCell>
    <Cell colSpan={4} />
  </Row>
);

const PartRow = ({ part }: { part: Part }) => (
  <Row $tone="#ececfb">
    <Cell $part $pl={3}>
      <Tick type="checkbox" aria-label={`Select ${part.num}`} />
    </Cell>
    <Cell $part />
    <Cell $part>{part.num}</Cell>
    <NameCell $part $pl={1}>{part.note}</NameCell>
    <Cell $part>5 6</Cell>
    <Cell $part />
    <Cell $part $pl={1}>74</Cell>
    <Cell $part $pl={1}>{part.qty}</Cell>
  </Row>
);

export default function App() {
  return (
    <Page>
      <GlobalStyle />
      <MenuBar>
        {menus.map((m) => (
          <MenuLink key={m} href="#">{m}</MenuLink>
        ))}
      </MenuBar>

      <VinBar $h={38}>
        <Group $pl={32} $pr={76} $pb={7} $gap={13}>
          <Label htmlFor="vin">VIN:</Label>
          <SelectWrap $w={176}>
            <SelectBox id="vin"><option /></SelectBox>
            <SelectArrow $blue>
              <svg width="9" height="6" viewBox="0 0 9 6" fill="none">
                <path d="M1 1l3.500 3.500L8 1" stroke="#3a4a80" strokeWidth="2" />
              </svg>
            </SelectArrow>
          </SelectWrap>
        </Group>
        <Group $pb={6} $pr={16}>
          <Icon name="car" title="Vehicle" />
        </Group>
        <Group $pr={20} $pb={5} $gap={3} $line>
          <TickBox>
            <Tick id="filter" type="checkbox" defaultChecked />
            <svg width="9" height="9" viewBox="0 0 9 9" fill="none">
              <path d="M1 3.500l2.500 3L8 1.500" stroke="#000" strokeWidth="2" />
            </svg>
          </TickBox>
          <Label htmlFor="filter">Filter On</Label>
        </Group>
        <Group $pl={21} $pr={21} $pb={7} $gap={3} $line>
          <LowLabel htmlFor="shortcut">Shortcut:</LowLabel>
          <TextBox id="shortcut" $w={124} />
        </Group>
        <Group $grow $gap={21} $pr={7} $pb={6}>
          <Icon name="monitor" title="Terminal" />
          <Icon name="book" title="Bookmarks" />
          <Icon name="bookSearch" title="Search catalog" />
          <Icon name="help" title="Help" />
        </Group>
      </VinBar>

      <NavBar $h={31}>
        <Group $pl={2} $pr={6} $gap={7} $pb={2} $line>
          <Icon name="home" title="Home" />
          <Icon name="back" title="Back" />
        </Group>
        <Group $pl={30}>
          <Country>US</Country>
        </Group>
        <Crumb type="button" $w={63}>
          2010
          <Triangle />
        </Crumb>
        <Crumb type="button" $w={65}>KA - DODG</Crumb>
        <Crumb type="button" $w={55}>3DJJ FRO</Crumb>
        <Crumb type="button" $w={91}>03 210 DIFFERE</Crumb>
        <Group $grow $line $pr={15}>
          <PubDate>Pub Date: Feb 2010</PubDate>
        </Group>
        <Group $pl={3} $pr={4} $gap={3}>
          <Icon name="up" title="Previous" />
          <Icon name="down" title="Next" />
        </Group>
      </NavBar>

      <Main>
        <Pane>
          <SearchBar $h={31}>
            <Group $pl={1} $pr={9} $pb={2} $gap={12} $line>
              <Icon name="edit" title="Edit" />
              <Icon name="glasses" title="View" />
              <Icon name="printer" title="Print" />
            </Group>
            <Group $pl={6} $gap={4}>
              <LowLabel htmlFor="quick">Quick Search:</LowLabel>
              <TextBox id="quick" $w={154} />
            </Group>
          </SearchBar>
          <PartsArea>
            <PartsScroll>
              <PartsTable>
                <colgroup>
                  {widths.map((w, i) => (
                    <col key={i} style={w ? { width: w } : undefined} />
                  ))}
                </colgroup>
                <thead>
                  <tr>
                    {heads.map((h, i) => (
                      <HeadCell key={i} scope="col"><HeadFace>{h}</HeadFace></HeadCell>
                    ))}
                  </tr>
                </thead>
                <tbody>
                  {parts.map((p, i) => (
                    <React.Fragment key={p.item}>
                      <ItemRow item={p.item} name={p.name} selected={i === 0} />
                      <PartRow part={p} />
                    </React.Fragment>
                  ))}
                  <ItemRow item="-16" name={'SHIM DRIVE PINION BEARING\n\u00a0'} />
                </tbody>
              </PartsTable>
            </PartsScroll>
            <Scrollbar $w={16} $pt={3}>
              <ScrollButton type="button" aria-label="Scroll up"><Triangle up /></ScrollButton>
              <Thumb />
              <Spacer />
              <ScrollButton type="button" aria-label="Scroll down"><Triangle /></ScrollButton>
            </Scrollbar>
          </PartsArea>
        </Pane>
        <Splitter />
        <Pane>
          <Bar $h={38}>
            <Group $pl={6} $pr={6} $pb={5} $line><Icon name="resize" title="Resize pane" /></Group>
            <Group $pl={7} $pr={6} $pb={5} $line><Icon name="pan" title="Fit" /></Group>
            <Group $pl={8} $pr={8} $pb={5} $gap={5} $line>
              <Icon name="zoomOut" title="Zoom out" />
              <Slider>
                <svg width="56" height="28" viewBox="0 0 56 28" fill="none">
                  <path d="M9 6.500h44" stroke="#000" />
                  <path d="M5.500 20v4M17.500 21v3M28.500 21v3M40.500 21v3M51.500 20v4" stroke="#000" />
                  <path d="M1-1h9v14l-5 5-4-5z" fill="#c8c6b8" />
                  <path d="M10.500-1v14l-5 5" stroke="#111" />
                </svg>
                <input type="range" aria-label="Zoom" min={0} max={4} defaultValue={0} />
              </Slider>
              <Icon name="zoomIn" title="Zoom in" />
            </Group>
            <Group $pl={4} $pr={7} $pb={5} $gap={10} $line>
              <Icon name="zone" title="Zone" />
              <Icon name="zoneSearch" title="Zone search" />
              <Icon name="clear" title="Clear callouts" />
            </Group>
            <Group $pl={7} $pb={5} $gap={12}>
              <Icon name="printer" title="Print" />
              <Icon name="envelope" title="Mail" />
            </Group>
          </Bar>
          <Viewer>
            <Illustration />
          </Viewer>
        </Pane>
      </Main>

      <SendBar $h={37}>
        <Group $pl={10} $pr={10} $line><Icon name="resize" title="Resize list" /></Group>
        <Group $pl={22} $pr={10} $gap={16} $line>
          <HighLabel htmlFor="send">Send To:</HighLabel>
          <SelectWrap $w={149}>
            <SelectBox id="send"><option /></SelectBox>
            <SelectArrow><Triangle /></SelectArrow>
          </SelectWrap>
          <SendButton type="button">Send</SendButton>
        </Group>
        <Group $pl={21} $pr={6} $gap={21} $line>
          <Icon name="fresh" title="New" />
          <Icon name="save" title="Save" />
          <Icon name="folder" title="Open" />
          <Icon name="add" title="Add" />
        </Group>
        <Group $pl={21} $pr={11} $gap={20} $line>
          <Icon name="trash" title="Delete" />
          <Icon name="listEdit" title="Erase" />
        </Group>
        <Group $pl={22} $pr={11} $gap={17} $line>
          <Icon name="envelope" title="Mail" />
          <Icon name="printer" title="Print" />
        </Group>
        <Group $pl={21} $pr={8} $gap={21} $line>
          <Icon name="edit" title="Edit" />
          <Icon name="columns" title="Columns" />
        </Group>
        <Group $pl={21}><Icon name="help" title="Help" /></Group>
      </SendBar>

      <ListArea>
        <ListBody>
          <ListTable>
            <colgroup>
              <col style={{ width: 24 }} />
              <col style={{ width: 48 }} />
              <col style={{ width: 86 }} />
              <col />
              <col style={{ width: 135 }} />
            </colgroup>
            <thead>
              <tr>
                <ListHead />
                <ListHead />
                <ListHead scope="col">Part Number</ListHead>
                <ListHead scope="col">Description</ListHead>
                <ListHead scope="col" $right>Qty</ListHead>
              </tr>
            </thead>
          </ListTable>
        </ListBody>
        <ListScroll>
          <Scrollbar $w={15}>
            <ScrollButton type="button" aria-label="Scroll up"><Triangle up dim /></ScrollButton>
            <Spacer />
            <ScrollButton type="button" aria-label="Scroll down"><Triangle dim /></ScrollButton>
          </Scrollbar>
        </ListScroll>
      </ListArea>

      <StatusBar>
        <StatusCell />
        <StatusCell />
        <StatusCell />
        <StatusCell $grow>02-01-2010</StatusCell>
        <StatusCell />
      </StatusBar>
    </Page>
  );
}
